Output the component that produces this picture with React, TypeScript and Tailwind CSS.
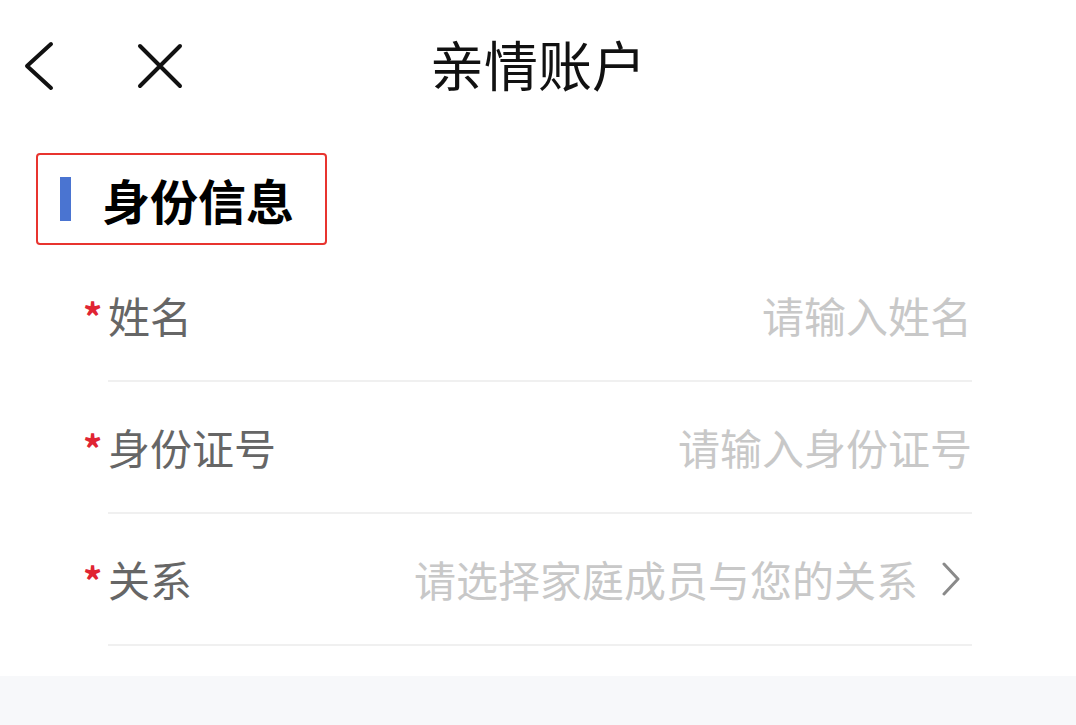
import React from "react";

const font = { fontFamily: '"Noto Sans CJK SC", "Noto Sans", sans-serif' };

type Field = { label: string; placeholder: string; arrow?: boolean };

const fields: Field[] = [
  { label: "姓名", placeholder: "请输入姓名" },
  { label: "身份证号", placeholder: "请输入身份证号" },
  { label: "关系", placeholder: "请选择家庭成员与您的关系", arrow: true },
];

function Row({ label, placeholder, arrow }: Field) {
  return (
    <div className="relative flex h-[132px] items-center justify-between border-b-2 border-[#f0f0f0]">
      <span className="absolute -left-[25px] top-[47px] text-[38px] font-bold leading-none text-[#e02433]">*</span>
      <span className="text-[42px] leading-none text-[#666666]">{label}</span>
      <div className="flex items-center">
        <span className="text-[42px] leading-none text-[#c8c8c8]">{placeholder}</span>
        {arrow && (
          <svg width="20" height="34" viewBox="0 0 20 34" className="ml-[23px] mr-[11px]">
            <path d="M3 2 L17 17 L3 32" fill="none" stroke="#8a8a8a" strokeWidth="3" strokeLinecap="round" strokeLinejoin="round" />
          </svg>
        )}
      </div>
    </div>
  );
}

export default function App() {
  return (
    <div style={font} className="flex h-[725px] w-[1076px] flex-col bg-white">
      <div className="relative flex h-[132px] items-center">
        <svg width="32" height="52" viewBox="0 0 32 52" className="ml-[23px]">
          <path d="M28 4 L4 26 L28 48" fill="none" stroke="#111" strokeWidth="4" strokeLinecap="round" strokeLinejoin="round" />
        </svg>
        <svg width="48" height="48" viewBox="0 0 48 48" className="ml-[81px]">
          <path d="M4 4 L44 44 M44 4 L4 44" fill="none" stroke="#111" strokeWidth="4" strokeLinecap="round" />
        </svg>
        <div className="absolute inset-x-0 top-[28px] text-center text-[54px] leading-[72px] text-[#111]">亲情账户</div>
      </div>

      <div className="ml-[36px] mt-[21px] flex h-[92px] w-[291px] items-center rounded-[4px] border-2 border-[#e8342f]">
        <div className="ml-[22px] h-[44px] w-[11px] bg-[#4a74d1]" />
        <span className="ml-[31px] text-[48px] font-bold leading-none text-black">身份信息</span>
      </div>

      <div className="ml-[108px] mr-[104px] mt-[5px]">
        {fields.map((f) => (
          <Row key={f.label} {...f} />
        ))}
      </div>

      <div className="mt-[30px] flex-1 bg-[#f7f8fa]" />
    </div>
  );
}
